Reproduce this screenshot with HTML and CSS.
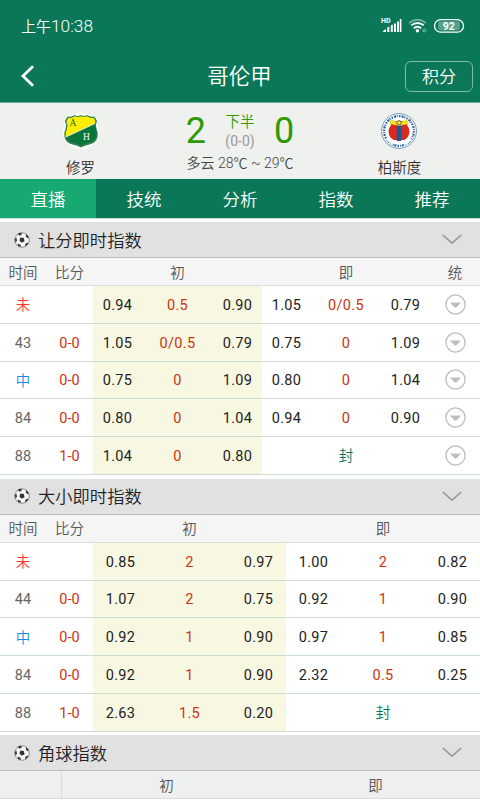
FILE: index.html
```
<!DOCTYPE html>
<html lang="zh-CN">
<head>
<meta charset="utf-8">
<title>哥伦甲</title>
<link rel="stylesheet" href="styles.css">
</head>
<body>
<svg width="0" height="0" class="defs">
  <symbol id="ball" viewBox="0 0 16 16">
    <circle cx="8" cy="8" r="7.3" fill="#f6f6f6" stroke="#777" stroke-width=".8"/>
    <path d="M6.400 5.400l3.400 .6 .8 3.200-2.800 1.600-2.400-2.200z M3.600 1.800L7 .7l1.200 1.500-2.600 1.600z M12 2l2.600 2.800-.6 1.700-2.200-2z M.8 7l1.600-1.400.6 3.200-1.400 1.600z M3.800 11.600l2.600 1.200.6 2.200-3-1z M11 12.200l2.700-1.600.6 1-2.800 2.800z" fill="#333"/>
  </symbol>
  <symbol id="chev" viewBox="0 0 20 11"><path d="M.8 1L10 9.2 19.2 1" fill="none" stroke="#979797" stroke-width="1.600"/></symbol>
  <symbol id="drop" viewBox="0 0 21 21"><circle cx="10.5" cy="10.5" r="9.6" fill="#fff" stroke="#bdbdbd" stroke-width="1.3"/><path d="M5 8.6h11l-4.2 4.3q-1.3 1-2.6 0z" fill="#bdbdbd"/></symbol>
</svg>
<header class="top">
  <div class="status">
    <span class="clock"><span>上午</span>10:38</span>
    <svg class="sys" width="84" height="20" viewBox="0 0 84 20">
      <text x="0" y="7.400" class="hd">HD</text>
      <path d="M2 16v-1l3-2v3zM6.300 16v-4.500l2-1V16zM9.800 16V9.500l2-1V16zM13 16V7.500h1.900V16zM16 16V5.500h1.900V16zM18.800 16V3h1.600v13z" fill="#fff"/>
      <g fill="none" stroke="#fff" stroke-width="2">
        <path d="M28 7q8.500-6.500 17 0" opacity=".4"/>
        <path d="M30.300 9.300q6.200-4.600 12.400 0M32.800 12.200q3.700-2.700 7.400 0"/>
      </g>
      <circle cx="36.500" cy="14.800" r="1.700" fill="#fff"/>
      <circle cx="43.300" cy="14.500" r="1.400" fill="none" stroke="#9bc9ba"/>
      <rect x="53.500" y="3.600" width="29" height="12.600" rx="6.300" fill="none" stroke="#fff" stroke-width="1.300"/>
      <rect x="57" y="5.300" width="22" height="9.200" rx="3" fill="#55a189"/>
      <text x="67.700" y="13.700" class="bat">92</text>
    </svg>
  </div>
  <nav class="bar">
    <svg class="back" width="14" height="22" viewBox="0 0 14 22"><path d="M13 1.300L3 11l10 9.700" fill="none" stroke="#fff" stroke-width="2.800"/></svg>
    <h1>哥伦甲</h1>
    <button class="points">积分</button>
  </nav>
</header>
<section class="match">
  <div class="team">
    <svg width="38" height="38" viewBox="0 0 38 38">
      <circle cx="19" cy="19" r="18" fill="#fff"/>
      <path d="M6 4.500q4 1 6.500-1.500 3 1.800 6.500 0 3.500 1.800 6.500 0 2.500 2.500 6.500 1.500 1.500 1 3 4.500-2 4-.5 8 2 4 1 8-1.500 6-8 7.500-5 1-8.500 3-3.500-2-8.500-3-6.500-1.500-8-7.500-1-4 1-8 1.500-4-.5-8 1.500-3.500 3-4.500z" fill="#357f53"/>
      <path d="M6.500 5.700q4 .8 6.200-1.500 3 1.600 6.300 0 3.300 1.600 6.300 0 2.200 2.300 6.200 1.500l2 3.400q-.5 1-.4 2.400L3.700 25q-.7-3.500.9-6.900 1.700-4.300-.1-8.800z" fill="#ffee00"/>
      <path d="M3.700 25.200L32.800 11.600q0 2.200.9 4.600 1.900 3.800.8 8-1.300 5-7.300 6.500-4.900 1-8.200 2.900-3.300-1.900-8.200-2.900-5.600-1.400-7.100-5.500z" fill="#0b763b"/>
      <path d="M3.500 25.200L33 11.500" stroke="#fff" stroke-width=".8"/>
      <text x="7.500" y="14" class="crest" fill="#17733a">A</text><text x="21" y="28" class="crest" fill="#fff">H</text>
    </svg>
    <span>修罗</span>
  </div>
  <div class="score">
    <div class="line"><b>2</b><div class="half"><span>下半</span><small>(0-0)</small></div><b>0</b></div>
    <div class="weather">多云 28℃ ~ 29℃</div>
  </div>
  <div class="team away">
    <svg width="38" height="38" viewBox="0 0 38 38">
      <circle cx="19" cy="19" r="17.400" fill="#fff" stroke="#6d9abc" stroke-width="1"/>
      <circle cx="19" cy="19" r="14.900" fill="none" stroke="#2e6599" stroke-width="2.200" stroke-dasharray="1.500 1.100 2 .7 1 1.200" pathLength="90"/>
      <path d="M6 27.500l4-2.500 4 6-2 2zM32 27.500l-4-2.500-4 6 2 2z" fill="#fff"/>
      <path d="M10.500 9h17l-.3 4.500q3 3.500 2 8-1 4.500-5 6.500h-10.400q-4-2-5-6.500-1-4.500 2-8z" fill="#d9291f"/>
      <path d="M16.800 12h4.400v17h-4.400z" fill="#155a98"/>
      <path d="M11 7.500l5 2h6l5-2 1.200 4.500-5.200 1-4 1-4-1-5.200-1z" fill="#f4df21"/>
      <circle cx="19" cy="10.800" r="2.200" fill="#f4e545" stroke="#444" stroke-width=".8"/>
    </svg>
    <span>柏斯度</span>
  </div>
</section>
<nav class="tabs"><a class="on">直播</a><a>技统</a><a>分析</a><a>指数</a><a>推荐</a></nav>
<main id="main"></main>
<script src="app.js"></script>
</body>
</html>
```
FILE: styles.css
```
* { box-sizing: border-box; }
html { overflow: hidden; }
body {
  margin: 0; width: 480px; height: 800px; overflow: hidden; background: #fff; color: #222;
  font-family: Roboto, "Noto Sans CJK SC", sans-serif; font-size: 14.5px;
}
.defs { position: absolute; }
.top { height: 103px; background: #0a7858; color: #fff; border-bottom: 1px solid #68ab97; }
.status { height: 52px; padding: 2px 15px 0 21px; display: flex; align-items: center; justify-content: space-between; }
.clock { font-size: 17.3px; font-weight: 350; padding-bottom: 3px; }
.clock span { font-size: 15px; }
.sys { margin-bottom: 3px; }
.hd { font: 700 7px Roboto, sans-serif; fill: #fff; }
.bat { font: 700 10.5px Roboto, sans-serif; fill: #fff; text-anchor: middle; }
.bar { height: 48px; display: grid; grid-template-columns: 100px 1fr 100px; align-items: center; padding: 0 7px 0 20px; }
.bar h1 { margin: 0 0 0 -14px; padding-top: 2px; font-size: 21.5px; font-weight: 350; text-align: center; line-height: 30px; }
.points {
  justify-self: end; width: 68px; height: 31px; padding: 0 0 2px; border: 1px solid #84baa9; border-radius: 6px;
  background: none; color: #fff; font: 350 17px "Noto Sans CJK SC", sans-serif;
}
.match { height: 76px; background: #eff1ef; display: grid; grid-template-columns: 161px 158px 161px; }
.team { display: flex; flex-direction: column; align-items: center; padding-top: 9px; font-size: 14.5px; font-weight: 350; line-height: 20px; color: #333; }
.team span { margin-top: 9px; }
.team svg { flex: none; }
.away { padding-right: 2px; }
.away span { padding-left: 2px; }
.crest { font: 9.500px "Liberation Serif", serif; }
.line { height: 50px; display: flex; justify-content: center; align-items: center; gap: 18px; padding-top: 7px; }
.line b { font-size: 36px; font-weight: 400; color: #2e9900; line-height: 42px; }
.line b { margin-top: -1px; }
.half { width: 32px; display: flex; flex-direction: column; align-items: center; line-height: 19px; color: #2e9900; white-space: nowrap; }
.half span { font-weight: 350; }
.half small { font-size: 14px; color: #999; }
.weather { text-align: center; font-size: 14px; font-weight: 350; line-height: 20px; color: #444; white-space: nowrap; }
.tabs { height: 39px; display: flex; background: #0a7858; }
.tabs a { flex: 1; color: #fff; font-size: 17.5px; font-weight: 350; line-height: 42px; text-align: center; }
.tabs .on { background: #16a972; }
main { padding-top: 4px; border-top: 1px solid #c5dfd6; }
.panel { margin-bottom: 4px; }
.tabs + main { padding-top: 3px; }
.goals { margin-bottom: 3.500px; }
.bar2 { height: 36px; background: #e1e1e1; border-bottom: 1px solid #bbb; padding: 0 18px 0 14px; display: flex; align-items: center; }
.bar2 h2 { flex: 1; margin: 0 0 0 8px; padding-top: 2px; font-size: 17.300px; font-weight: 350; color: #222; line-height: 34px; }
.row { display: grid; height: 37.750px; align-items: stretch; border-bottom: 1px solid #cbdcd4; }
.asia .row { grid-template-columns: 46px 47px 169px 168px 50px; }
.goals .row { grid-template-columns: 46px 47px 193px 194px; }
.corner .row { grid-template-columns: 61px 210px 209px; }
.row > * { display: flex; align-items: center; justify-content: center; }
.row > .time, .row > .res, .row > .odds { padding-top: 2px; }
.row > .time.pre, .row > .time.ht { padding: 0 0 1px; font-weight: 350; }
.head.row { height: 28px; background: #f5f5f5; border-bottom-color: #ddd; color: #555; font-weight: 350; }
.head span { padding-bottom: 1px; }
.corner .head.row { background: #eeeff1; }
.corner .head span + span { border-left: 1px solid #d9dcd9; }
.corner .head span + span + span { border-left: 0; }
.time { color: #666; }
.time.pre { color: #f33; }
.time.ht { color: #1a8cec; }
.res { color: #cc3311; }
.row .odds { display: grid; grid-template-columns: 49px 1fr 49px; text-align: center; letter-spacing: .35px; }
.goals .row .odds { grid-template-columns: 55px 1fr 55px; }
.odds i { font-style: normal; color: #cc3311; }
.first { background: #f8f7e2; }
.row > .closed { color: #0a7858; font-weight: 350; padding-bottom: 1px; }
```
FILE: app.js
```
const asia = [
  ["未", "", "0.94 0.5 0.90", "1.05 0/0.5 0.79"],
  ["43", "0-0", "1.05 0/0.5 0.79", "0.75 0 1.09"],
  ["中", "0-0", "0.75 0 1.09", "0.80 0 1.04"],
  ["84", "0-0", "0.80 0 1.04", "0.94 0 0.90"],
  ["88", "1-0", "1.04 0 0.80", ""]
];
const goals = [
  ["未", "", "0.85 2 0.97", "1.00 2 0.82"],
  ["44", "0-0", "1.07 2 0.75", "0.92 1 0.90"],
  ["中", "0-0", "0.92 1 0.90", "0.97 1 0.85"],
  ["84", "0-0", "0.92 1 0.90", "2.32 0.5 0.25"],
  ["88", "1-0", "2.63 1.5 0.20", ""]
];
const odds = (s, cls) => {
  if (!s) return '<div class="closed">封</div>';
  const [a, b, c] = s.split(" ");
  return `<div class="odds ${cls}"><span>${a}</span><i>${b}</i><span>${c}</span></div>`;
};
const panel = (cls, title, heads, rows) => `<section class="panel ${cls}">
  <div class="bar2"><svg width="16" height="16"><use href="#ball"/></svg><h2>${title}</h2><svg width="20" height="11"><use href="#chev"/></svg></div>
  <div class="row head">${heads.map(h => `<span>${h}</span>`).join("")}</div>
  ${rows.map(([t, r, a, b]) => `<div class="row">
    <div class="time ${t === "未" ? "pre" : t === "中" ? "ht" : ""}">${t}</div><div class="res">${r}</div>
    ${odds(a, "first")}${odds(b, "")}
    ${cls === "asia" ? '<div><svg width="21" height="21"><use href="#drop"/></svg></div>' : ""}</div>`).join("")}
</section>`;
document.getElementById("main").innerHTML =
  panel("asia", "让分即时指数", ["时间", "比分", "初", "即", "统"], asia) +
  panel("goals", "大小即时指数", ["时间", "比分", "初", "即"], goals) +
  panel("corner", "角球指数", ["", "初", "即"], []);
```
